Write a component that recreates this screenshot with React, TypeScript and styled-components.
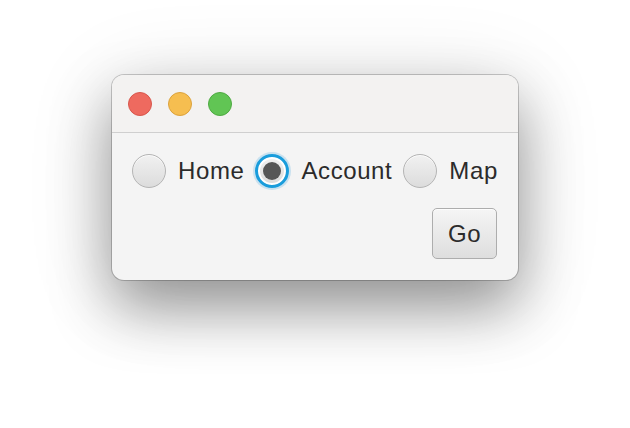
import React from "react";
import styled, { createGlobalStyle } from "styled-components";

const Global = createGlobalStyle`
  html, body { margin: 0; padding: 0; background: #ffffff; }
  body { font-family: "Liberation Sans", Arial, sans-serif; }
`;

const Page = styled.div`
  width: 630px;
  height: 428px;
  display: flex;
  justify-content: center;
  align-items: flex-start;
  padding-top: 75px;
  box-sizing: border-box;
  overflow: hidden;
`;

const Window = styled.div`
  width: 406px;
  height: 205px;
  border-radius: 12px;
  background: #f4f4f4;
  box-sizing: border-box;
  overflow: hidden;
  display: flex;
  flex-direction: column;
  box-shadow: 0 0 0 1px rgba(0, 0, 0, 0.2), 0 28px 60px rgba(0, 0, 0, 0.38),
    0 10px 90px rgba(0, 0, 0, 0.12);
`;

const TitleBar = styled.div`
  height: 57px;
  flex: none;
  background: #f3f2f1;
  border-bottom: 1px solid #cfcfcf;
  display: flex;
  align-items: center;
  gap: 16px;
  padding-left: 16px;
`;

const Light = styled.span<{ $fill: string; $edge: string }>`
  width: 24px;
  height: 24px;
  border-radius: 50%;
  box-sizing: border-box;
  background: ${(p) => p.$fill};
  border: 1px solid ${(p) => p.$edge};
`;

const Body = styled.div`
  flex: 1;
  display: flex;
  flex-direction: column;
  padding: 20px 21px 21px 20px;
  gap: 19px;
`;

const RadioRow = styled.div`
  display: flex;
  align-items: center;
  gap: 11px;
`;

const RadioItem = styled.label`
  display: flex;
  align-items: center;
  gap: 12px;
  font-size: 24px;
  letter-spacing: 0.6px;
  color: #2b2b2b;
  line-height: 36px;
`;

const Circle = styled.span<{ $on?: boolean }>`
  width: 34px;
  height: 34px;
  border-radius: 50%;
  box-sizing: border-box;
  display: flex;
  align-items: center;
  justify-content: center;
  background: ${(p) =>
    p.$on
      ? "linear-gradient(#f2f2f2, #dadada)"
      : "linear-gradient(#f1f1f1, #dcdcdc)"};
  border: ${(p) => (p.$on ? "3px solid #1a9ddc" : "1.5px solid #b4b4b4")};
  box-shadow: ${(p) =>
    p.$on
      ? "0 0 0 2px rgba(120, 190, 230, 0.35), inset 0 0 0 2px #ffffff"
      : "inset 0 1px 0 rgba(255,255,255,0.7)"};
`;

const Dot = styled.span`
  width: 18px;
  height: 18px;
  border-radius: 50%;
  background: #565656;
`;

const Actions = styled.div`
  display: flex;
  justify-content: flex-end;
`;

const Button = styled.button`
  width: 65px;
  height: 51px;
  box-sizing: border-box;
  border: 1.5px solid #adadad;
  border-radius: 5px;
  background: linear-gradient(#f5f5f5, #dedede);
  font-family: "Liberation Sans", Arial, sans-serif;
  font-size: 24px;
  letter-spacing: 0.6px;
  color: #2b2b2b;
  padding: 0;
  box-shadow: inset 0 1px 0 rgba(255, 255, 255, 0.8);
`;

export default function App() {
  return (
    <>
      <Global />
      <Page>
        <Window>
          <TitleBar>
            <Light $fill="#ee6a5f" $edge="#d8564c" />
            <Light $fill="#f6be50" $edge="#dca23c" />
            <Light $fill="#61c554" $edge="#4eaa42" />
          </TitleBar>
          <Body>
            <RadioRow>
              <RadioItem>
                <Circle />
                Home
              </RadioItem>
              <RadioItem>
                <Circle $on>
                  <Dot />
                </Circle>
                Account
              </RadioItem>
              <RadioItem>
                <Circle />
                Map
              </RadioItem>
            </RadioRow>
            <Actions>
              <Button>Go</Button>
            </Actions>
          </Body>
        </Window>
      </Page>
    </>
  );
}
